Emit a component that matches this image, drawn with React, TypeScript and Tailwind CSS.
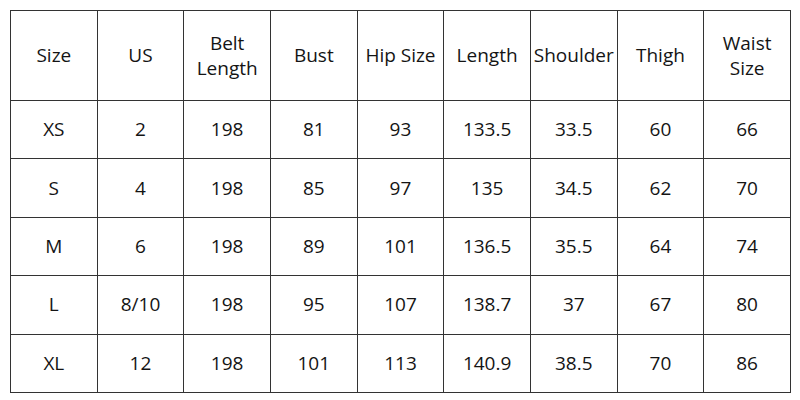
const headers = ['Size', 'US', 'Belt Length', 'Bust', 'Hip Size', 'Length', 'Shoulder', 'Thigh', 'Waist Size']

const rows = [
  ['XS', '2', '198', '81', '93', '133.5', '33.5', '60', '66'],
  ['S', '4', '198', '85', '97', '135', '34.5', '62', '70'],
  ['M', '6', '198', '89', '101', '136.5', '35.5', '64', '74'],
  ['L', '8/10', '198', '95', '107', '138.7', '37', '67', '80'],
  ['XL', '12', '198', '101', '113', '140.9', '38.5', '70', '86'],
]

export default function App() {
  return (
    <div className="w-[800px] h-[400px] bg-white pt-[10px] pl-[10px]" style={{ fontFamily: '"Open Sans", "Noto Sans", sans-serif' }}>
      <table className="w-[781px] table-fixed border-collapse text-[19px] leading-[25px] text-[#141414]">
        <thead>
          <tr className="h-[90px]">
            {headers.map((h) => (
              <th key={h} className="border border-[#333] font-normal text-center px-0">
                {h}
              </th>
            ))}
          </tr>
        </thead>
        <tbody>
          {rows.map((r) => (
            <tr key={r[0]} className="h-[58.4px]">
              {r.map((c, i) => (
                <td key={i} className="border border-[#333] text-center">
                  {c}
                </td>
              ))}
            </tr>
          ))}
        </tbody>
      </table>
    </div>
  )
}
